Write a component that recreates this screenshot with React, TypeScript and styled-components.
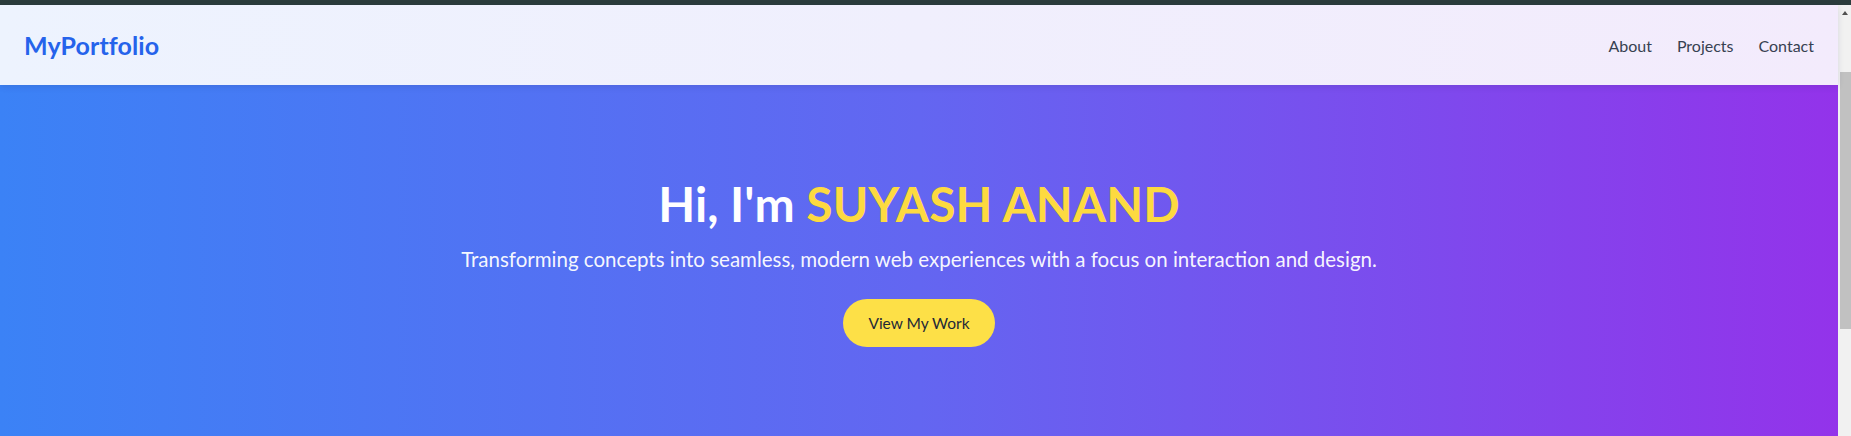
import React from "react";
import styled, { createGlobalStyle } from "styled-components";

const GlobalStyle = createGlobalStyle`
  html, body { margin: 0; padding: 0; }
  body {
    font-family: "Lato", "Noto Sans", sans-serif;
    background: #ffffff;
    overflow: hidden;
    -webkit-font-smoothing: antialiased;
  }
  * { box-sizing: border-box; }
`;

const TopStrip = styled.div`
  height: 5px;
  background: #2b3c3c;
`;

const Shell = styled.div`
  display: flex;
  height: 431px;
`;

const Main = styled.div`
  flex: 1;
  min-width: 0;
  display: flex;
  flex-direction: column;
`;

const Header = styled.header`
  position: relative;
  z-index: 2;
  flex: 0 0 80px;
  padding: 0 24px;
  display: flex;
  align-items: center;
  justify-content: space-between;
  background: linear-gradient(90deg, #edf3fe 0%, #f0effd 50%, #f3ebfc 100%);
  box-shadow: 0 2px 6px rgba(30, 30, 80, 0.12);
`;

const Logo = styled.a`
  font-size: 25px;
  font-weight: 700;
  color: #2563eb;
  text-decoration: none;
  letter-spacing: 0.1px;
`;

const Nav = styled.nav`
  display: flex;
  align-items: center;
  gap: 25px;
`;

const NavLink = styled.a`
  font-size: 16px;
  color: #374151;
  text-decoration: none;
`;

const Hero = styled.section`
  flex: 1;
  padding-top: 95px;
  display: flex;
  flex-direction: column;
  align-items: center;
  text-align: center;
  color: #ffffff;
  background: linear-gradient(90deg, #3b82f6 0%, #6366f1 50%, #9333ea 100%);
`;

const Title = styled.h1`
  margin: 0 0 17px;
  font-size: 48px;
  line-height: 48px;
  font-weight: 700;
  color: #ffffff;
`;

const Name = styled.span`
  color: #fdda40;
`;

const Subtitle = styled.p`
  margin: 0 0 26px;
  font-size: 20.5px;
  line-height: 28px;
  color: rgba(255, 255, 255, 0.96);
`;

const CtaButton = styled.a`
  display: inline-flex;
  align-items: center;
  justify-content: center;
  height: 48px;
  padding: 0 25px;
  border-radius: 9999px;
  background: #fde047;
  color: #1f2937;
  font-size: 15.5px;
  text-decoration: none;
`;

/* The browser's vertical scroll bar, as seen in the screenshot */
const ScrollRail = styled.div`
  flex: 0 0 13px;
  display: flex;
  flex-direction: column;
  align-items: flex-end;
  background: #f1f1f1;
`;

const ScrollArrow = styled.span`
  align-self: center;
  width: 0;
  height: 0;
  margin-top: 6px;
  border-left: 3.5px solid transparent;
  border-right: 3.5px solid transparent;
  border-bottom: 4px solid #505050;
`;

const ScrollThumb = styled.span`
  width: 11px;
  height: 257px;
  margin-top: 57px;
  background: #c1c1c1;
`;

export default function App() {
  return (
    <>
      <GlobalStyle />
      <TopStrip />
      <Shell>
        <Main>
          <Header>
            <Logo href="#">MyPortfolio</Logo>
            <Nav>
              <NavLink href="#about">About</NavLink>
              <NavLink href="#projects">Projects</NavLink>
              <NavLink href="#contact">Contact</NavLink>
            </Nav>
          </Header>
          <Hero>
            <Title>
              Hi, I'm <Name>SUYASH ANAND</Name>
            </Title>
            <Subtitle>
              Transforming concepts into seamless, modern web experiences with a focus on interaction and design.
            </Subtitle>
            <CtaButton href="#projects">View My Work</CtaButton>
          </Hero>
        </Main>
        <ScrollRail>
          <ScrollArrow />
          <ScrollThumb />
        </ScrollRail>
      </Shell>
    </>
  );
}
